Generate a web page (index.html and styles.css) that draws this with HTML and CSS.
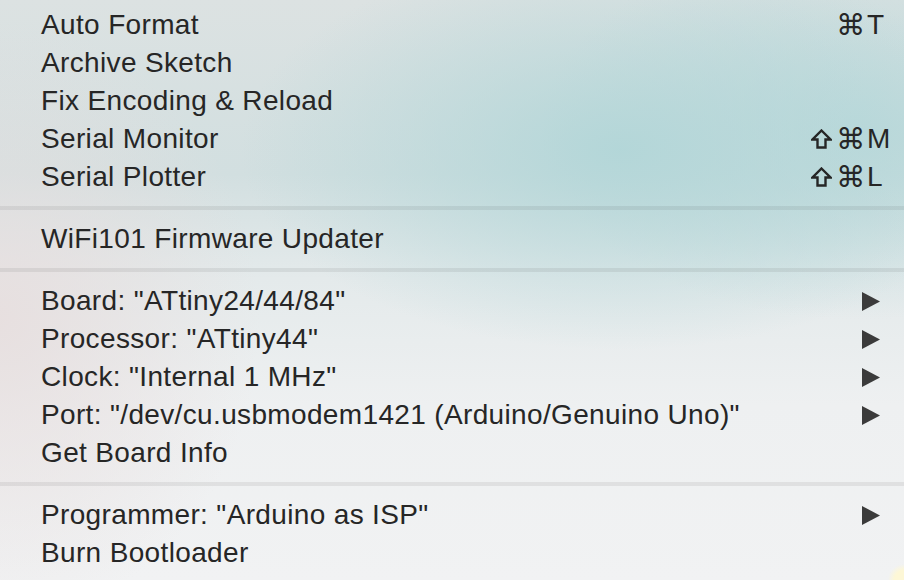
FILE: index.html
```html
<!DOCTYPE html>
<html>
  <head>
    <title>Tools menu</title>
    <link rel="stylesheet" href="styles.css">
  </head>
  <body>
    <div class="menu">
      <div class="item"><span class="label">Auto Format</span><span class="mods">⌘</span><span class="key">T</span></div>
      <div class="item"><span class="label">Archive Sketch</span></div>
      <div class="item"><span class="label">Fix Encoding &amp; Reload</span></div>
      <div class="item"><span class="label">Serial Monitor</span>
        <svg class="shift" width="21" height="20" viewBox="0 0 21 20"><path d="M10.5 1.5 L19.5 10.5 L14.5 10.5 L14.5 18.5 L6.5 18.5 L6.5 10.5 L1.5 10.5 Z"/></svg><span class="mods">⌘</span><span class="key">M</span></div>
      <div class="item"><span class="label">Serial Plotter</span>
        <svg class="shift" width="21" height="20" viewBox="0 0 21 20"><path d="M10.5 1.5 L19.5 10.5 L14.5 10.5 L14.5 18.5 L6.5 18.5 L6.5 10.5 L1.5 10.5 Z"/></svg><span class="mods">⌘</span><span class="key">L</span></div>

      <div class="separator"></div>

      <div class="item"><span class="label">WiFi101 Firmware Updater</span></div>

      <div class="separator"></div>

      <div class="item"><span class="label">Board: "ATtiny24/44/84"</span>
        <svg class="arrow" width="18" height="19" viewBox="0 0 18 19"><polygon points="0,0 18,9.5 0,19"/></svg></div>
      <div class="item"><span class="label">Processor: "ATtiny44"</span>
        <svg class="arrow" width="18" height="19" viewBox="0 0 18 19"><polygon points="0,0 18,9.5 0,19"/></svg></div>
      <div class="item"><span class="label">Clock: "Internal 1 MHz"</span>
        <svg class="arrow" width="18" height="19" viewBox="0 0 18 19"><polygon points="0,0 18,9.5 0,19"/></svg></div>
      <div class="item"><span class="label">Port: "/dev/cu.usbmodem1421 (Arduino/Genuino Uno)"</span>
        <svg class="arrow" width="18" height="19" viewBox="0 0 18 19"><polygon points="0,0 18,9.5 0,19"/></svg></div>
      <div class="item"><span class="label">Get Board Info</span></div>

      <div class="separator"></div>

      <div class="item"><span class="label">Programmer: "Arduino as ISP"</span>
        <svg class="arrow" width="18" height="19" viewBox="0 0 18 19"><polygon points="0,0 18,9.5 0,19"/></svg></div>
      <div class="item"><span class="label">Burn Bootloader</span></div>
    </div>
  </body>
</html>
```

FILE: styles.css
```css
html,
body {
  margin: 0;
  padding: 0;
  height: 100%;
}

body {
  font-family: "Liberation Sans", Arial, sans-serif;
  color: #262626;
  background: #eef0f1;
  overflow: hidden;
}

/* the menu sits on a blurred desktop, so the panel gets soft colour blobs */
.menu {
  height: 580px;
  box-sizing: border-box;
  padding-top: 6px;
  background:
    radial-gradient(circle 16px at 904px 580px, #fdf7d6 60%, rgba(253, 247, 214, 0) 100%),
    radial-gradient(ellipse 380px 200px at 620px 150px, rgba(178, 214, 216, 0.95), rgba(178, 214, 216, 0) 100%),
    radial-gradient(ellipse 320px 190px at 860px 130px, rgba(184, 216, 218, 0.9), rgba(184, 216, 218, 0) 100%),
    radial-gradient(ellipse 260px 300px at 0px 320px, rgba(231, 222, 222, 0.9), rgba(231, 222, 222, 0) 100%),
    linear-gradient(180deg, #dce2e2 0%, #d2dfe0 30%, #e4eaeb 48%, #eef0f1 70%, #f1f2f3 100%);
}

.item {
  display: flex;
  align-items: center;
  height: 38px;
  padding-left: 41px;
  font-size: 28px;
  letter-spacing: 0.35px;
  white-space: nowrap;
}

.label {
  flex: 1;
}

.shift {
  fill: none;
  stroke: #262626;
  stroke-width: 2.4;
  stroke-linejoin: miter;
  margin-right: 4px;
}

.mods {
  font-family: "DejaVu Sans", sans-serif;
  font-size: 29px;
  letter-spacing: 0;
  text-align: right;
  margin-right: 2px;
}

.key {
  width: 37px;
  text-align: left;
  letter-spacing: 0;
}

.arrow {
  fill: #3b3b3b;
  margin-right: 24px;
}

.separator {
  height: 4px;
  margin: 10px 0;
  background: rgba(0, 0, 0, 0.065);
}
```
